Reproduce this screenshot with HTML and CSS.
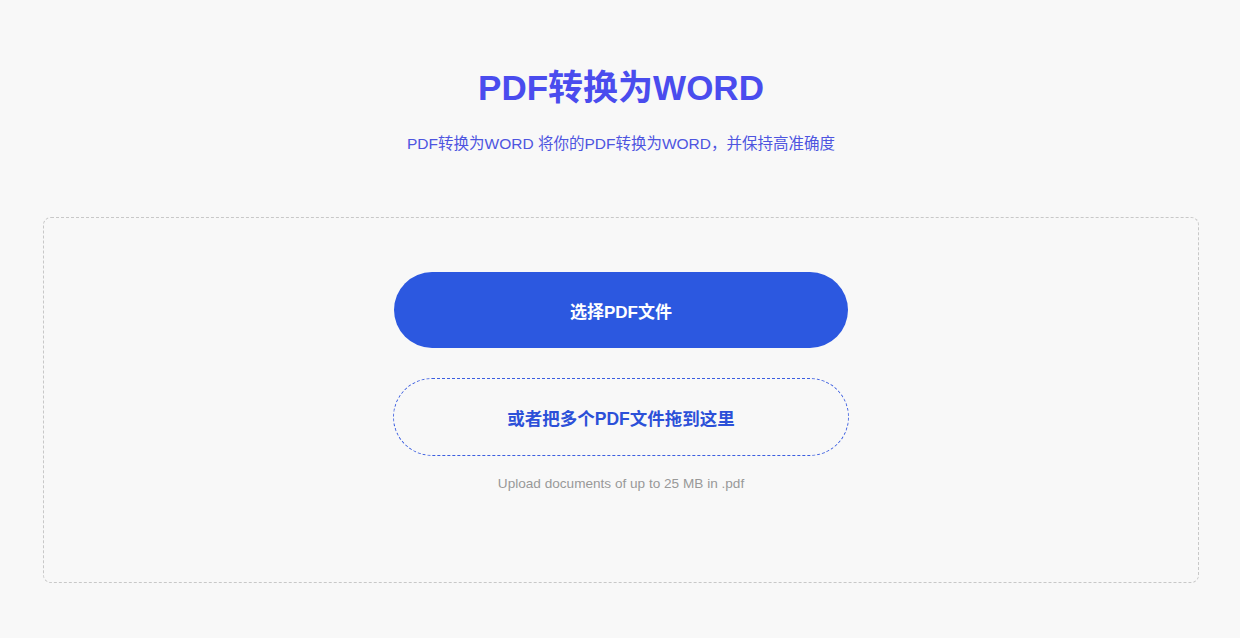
FILE: index.html
```html
<!DOCTYPE html>
<html lang="zh">
<head>
<meta charset="utf-8">
<link rel="stylesheet" href="styles.css">
</head>
<body>
<div class="page">
  <header class="hero">
    <h1 class="title">PDF转换为WORD</h1>
    <p class="subtitle">PDF转换为WORD 将你的PDF转换为WORD，并保持高准确度</p>
  </header>
  <section class="dropzone">
    <button class="btn-select">选择PDF文件</button>
    <div class="btn-drop">或者把多个PDF文件拖到这里</div>
    <p class="hint">Upload documents of up to 25 MB in .pdf</p>
  </section>
</div>
</body>
</html>
```
FILE: styles.css
```css
html, body {
  margin: 0;
  padding: 0;
  background: #f8f8f8;
  font-family: "Liberation Sans", Arial, "Noto Sans CJK SC", sans-serif;
}
.page {
  width: 1240px;
  height: 638px;
  box-sizing: border-box;
  padding: 0 41px 0 43px;
}
.hero {
  text-align: center;
  padding-top: 66px;
}
.title {
  margin: 0;
  font-size: 35px;
  line-height: 44px;
  font-weight: bold;
  color: #4a4cee;
}
.subtitle {
  margin: 25px 0 0;
  font-size: 15.5px;
  line-height: 18px;
  color: #4e55e0;
}
.dropzone {
  margin-top: 64px;
  height: 366px;
  box-sizing: border-box;
  border: 1px dashed #c8c8c8;
  border-radius: 8px;
  display: flex;
  flex-direction: column;
  align-items: center;
  padding-top: 54px;
}
.btn-select {
  width: 454px;
  height: 76px;
  border: none;
  border-radius: 38px;
  background: #2c58e0;
  color: #fff;
  font-family: inherit;
  font-size: 17px;
  font-weight: bold;
  cursor: pointer;
}
.btn-drop {
  margin-top: 30px;
  width: 456px;
  height: 78px;
  box-sizing: border-box;
  border: 1px dashed #3c5ee0;
  border-radius: 39px;
  display: flex;
  align-items: center;
  justify-content: center;
  color: #2c50d8;
  font-size: 17.5px;
  font-weight: bold;
}
.hint {
  margin: 19px 0 0;
  font-size: 13.6px;
  line-height: 18px;
  color: #999;
}
```
